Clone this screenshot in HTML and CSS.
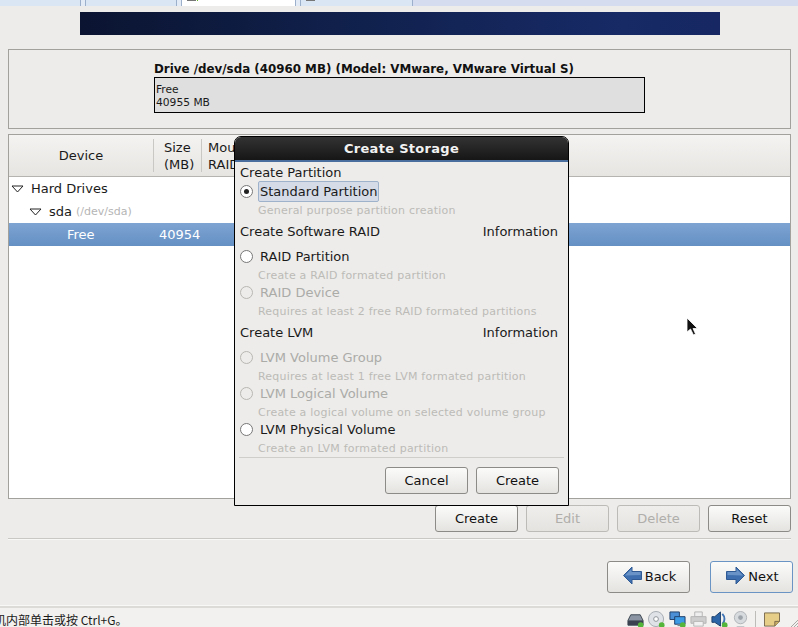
FILE: index.html
```html
<!DOCTYPE html>
<html lang="zh">
<head>
<meta charset="utf-8">
<title>Create Storage</title>
<link rel="stylesheet" href="styles.css">
</head>
<body>
<div class="screen">
  <div class="tabs">
    <div class="tab t1"></div>
    <div class="tab t2"></div>
    <div class="tab active"><i class="tabicon"></i></div>
    <div class="tab t4"><i class="tabicon grey"></i></div>
    <div class="tabrest"></div>
  </div>
  <main class="installer">
    <div class="banner"></div>
    <section class="drive">
      <div class="drive-inner">
        <div class="drive-title">Drive /dev/sda (40960 MB) (Model: VMware, VMware Virtual S)</div>
        <div class="drive-bar">Free<br>40955 MB</div>
      </div>
    </section>
    <section class="tree">
      <div class="tree-head">
        <div class="th th-device">Device</div>
        <div class="th th-size">Size<br>(MB)</div>
        <div class="th th-mount">Mount Point/<br>RAID/Volume</div>
      </div>
      <div class="row r1"><svg class="exp" width="13" height="8" viewBox="0 0 13 8"><path d="M1 1h11L6.500 7z" fill="#fff" stroke="#222"/></svg><span>Hard Drives</span></div>
      <div class="row r2"><svg class="exp" width="13" height="8" viewBox="0 0 13 8"><path d="M1 1h11L6.500 7z" fill="#fff" stroke="#222"/></svg><span>sda</span> <small>(/dev/sda)</small></div>
      <div class="row selected"><span class="c-free">Free</span><span>40954</span></div>
    </section>
    <div class="actions">
      <button class="btn">Create</button>
      <button class="btn off">Edit</button>
      <button class="btn off">Delete</button>
      <button class="btn">Reset</button>
    </div>
    <hr class="sep">
    <div class="nav">
      <button class="btn big">
        <svg width="19" height="20" viewBox="0 0 19 20"><path d="M0.500 9.500 9 1v4.500h9.500v8H9V18z" fill="#3f6fae" stroke="#2f5a94"/><path d="M2 9.500 8.500 3v3h9v3z" fill="#6a94c8"/></svg>Back
      </button>
      <button class="btn big focus">
        <svg width="19" height="20" viewBox="0 0 19 20"><path d="M18.500 9.500 10 1v4.500H.5v8H10V18z" fill="#3f6fae" stroke="#2f5a94"/><path d="M17 9.500 10.500 3v3h-9v3z" fill="#6a94c8"/></svg>Next
      </button>
    </div>
  </main>
  <footer class="status">
    <span class="hint">机内部单击或按 Ctrl+G。</span>
    <div class="tray">
      <svg width="17" height="17" viewBox="0 0 18 18"><path d="M1 10 4 4h10l3 6v5H1z" fill="#8a94a2" stroke="#3a4450"/><path d="M1 10h16v5H1z" fill="#39424e"/><circle cx="14.500" cy="15" r="3" fill="#55b53a"/></svg>
      <svg width="17" height="17" viewBox="0 0 18 18"><circle cx="8.500" cy="8.500" r="8" fill="#dfe2e6" stroke="#a4aab0"/><circle cx="8.500" cy="8.500" r="2.500" fill="#fff" stroke="#8a9096"/><circle cx="14.500" cy="15" r="3" fill="#55b53a"/></svg>
      <svg width="17" height="17" viewBox="0 0 18 18"><path d="M1 1h10v8H1z" fill="#4b8fd6" stroke="#1f3d66"/><path d="M6 6h11v8H6z" fill="#3d9be6" stroke="#1f3d66"/><path d="M9 14h5v2H9z" fill="#789"/><circle cx="14.500" cy="15" r="3" fill="#55b53a"/></svg>
      <svg class="dim" width="17" height="17" viewBox="0 0 18 18"><path d="M5 1h8v5H5z" fill="#eee" stroke="#aaa"/><path d="M1 6h16v7H1z" fill="#c9c9c9" stroke="#aaa"/><path d="M4 11h10v5H4z" fill="#f2f2f2" stroke="#aaa"/></svg>
      <svg width="17" height="17" viewBox="0 0 18 18"><path d="M1 6h3l6-5v15l-6-4H1z" fill="#2d66a8" stroke="#173a66"/><path d="M12 3c3 3 3 8 0 11" fill="none" stroke="#3f74b4" stroke-width="2"/><circle cx="14.500" cy="15" r="3" fill="#55b53a"/></svg>
      <svg class="dim" width="17" height="17" viewBox="0 0 18 18"><circle cx="9" cy="7" r="6.500" fill="#d4d8dc" stroke="#a4a8ac"/><circle cx="9" cy="7" r="2.500" fill="#8f979f"/><path d="M5 16h8v1.500H5z" fill="#b6babe"/></svg>
      <i class="traysep"></i>
      <svg width="16" height="15" viewBox="0 0 17 15"><path d="M.5.500h16v9l-5 5H.5z" fill="#e6cd88" stroke="#77664a"/><path d="M16.500 9.500h-5v5" fill="#c9ae66" stroke="#77664a"/></svg>
    </div>
    <svg class="grip" width="7" height="7" viewBox="0 0 7 7"><path d="M0 7 7 0M3 7l4-4M6 7l1-1" stroke="#a9a8a4" fill="none"/></svg>
  </footer>

  <div class="dialog" role="dialog">
    <div class="dlg-title">Create Storage</div>
    <div class="dlg-body">
      <div class="hd">Create Partition</div>
      <div class="opt o-first"><i class="radio on"></i><span class="label focused">Standard Partition</span></div>
      <div class="desc">General purpose partition creation</div>
      <div class="hd hd-info"><span>Create Software RAID</span><span>Information</span></div>
      <div class="opt o-raid"><i class="radio"></i><span class="label">RAID Partition</span></div>
      <div class="desc">Create a RAID formated partition</div>
      <div class="opt dis"><i class="radio"></i><span class="label">RAID Device</span></div>
      <div class="desc">Requires at least 2 free RAID formated partitions</div>
      <div class="hd hd-info"><span>Create LVM</span><span>Information</span></div>
      <div class="opt dis o-raid"><i class="radio"></i><span class="label">LVM Volume Group</span></div>
      <div class="desc">Requires at least 1 free LVM formated partition</div>
      <div class="opt dis"><i class="radio"></i><span class="label">LVM Logical Volume</span></div>
      <div class="desc">Create a logical volume on selected volume group</div>
      <div class="opt"><i class="radio"></i><span class="label">LVM Physical Volume</span></div>
      <div class="desc">Create an LVM formated partition</div>
      <hr class="dlg-sep">
      <div class="dlg-actions">
        <button class="btn">Cancel</button>
        <button class="btn">Create</button>
      </div>
    </div>
  </div>

  <svg class="cursor" width="13" height="20" viewBox="0 0 13 20"><path d="M1 1v14l3.500-3 3 6 2-1-2.500-5.500h4.500z" fill="#111" stroke="#fff" stroke-width=".8"/></svg>
</div>
</body>
</html>
```

FILE: styles.css
```css
* { box-sizing: border-box; }
html, body { margin: 0; padding: 0; }
body { font-family: "DejaVu Sans", sans-serif; font-size: 13px; color: #1a1a1a; background: #edecea; }
.screen { position: relative; width: 798px; height: 627px; overflow: hidden; display: flex; flex-direction: column; background: #edecea; }

.tabs { height: 6px; display: flex; flex: none; background: #e3ebf7; }
.tab { height: 6px; background: #dbe6f5; border-right: 1px solid #9cb0cc; position: relative; }
.t1 { width: 81px; }
.t2 { width: 92px; margin-left: 4px; border-left: 1px solid #9cb0cc; }
.active { width: 115px; margin-left: 4px; background: #fff; border-left: 1px solid #9cb0cc; }
.t4 { width: 113px; margin-left: 4px; border-left: 1px solid #9cb0cc; }
.tabicon { position: absolute; left: 5px; top: 0; width: 9px; height: 1px; background: #777; }
.tabicon:not(.grey)::after { content: ""; position: absolute; left: 10px; top: 0; width: 1px; height: 1px; background: #6ab82e; }
.tabrest { flex: 1; background: #d5dcef; }

.installer { flex: 1; min-height: 0; padding: 6px 7px 0 8px; display: flex; flex-direction: column; }
.banner { width: 640px; height: 23px; margin-left: 72px; flex: none; background: linear-gradient(90deg, #0b1431 0%, #10204b 40%, #172a66 85%, #162763 100%); }

.drive { height: 80px; margin-top: 14px; border: 1px solid #a3a19c; flex: none; padding: 12px 0 0 145px; }
.drive-title { font-weight: bold; font-size: 11.870px; line-height: 14px; color: #111; white-space: nowrap; }
.drive-bar { width: 491px; height: 36px; margin-top: 1px; border: 1px solid #000; background: #dfdfdf; font-size: 10.700px; line-height: 13px; padding: 5px 0 0 1px; }

.tree { height: 365px; margin-top: 5px; border: 1px solid #a3a19c; background: #fff; flex: none; }
.tree-head { height: 42px; display: flex; background: linear-gradient(#f4f3f1, #e6e5e2); border-bottom: 1px solid #b6b4b0; }
.th { display: flex; align-items: center; line-height: 17px; font-size: 13px; margin: 4px 0; padding-left: 10px; border-right: 1px solid #c9c8c4; }
.th-device { width: 145px; justify-content: center; padding: 0; }
.th-size { width: 48px; }
.th-mount { width: 300px; border: 0; padding-left: 6px; white-space: nowrap; }
.row { height: 23px; display: flex; align-items: center; font-size: 13px; white-space: pre; }
.exp { flex: none; }
.r1 { padding-left: 2px; }
.r1 span { margin-left: 7px; }
.r2 { padding-left: 20px; }
.r2 span { margin-left: 7px; }
.r2 small { font-size: 11px; color: #b5b5b5; margin-left: 4px; }
.selected { background: linear-gradient(#7ea4d2, #6490c4); color: #fff; }
.c-free { width: 150px; padding-left: 58px; }

.actions { display: flex; justify-content: flex-end; gap: 8px; margin-top: 6px; flex: none; }
.btn { width: 83px; height: 27px; padding: 0; border: 1px solid #8d8b87; border-radius: 3px; background: linear-gradient(#fbfbfa, #e4e3e0); font-family: inherit; font-size: 13px; color: #111; }
.off { color: #b0aeaa; border-color: #bdbbb7; background: linear-gradient(#efeeec, #e4e3e0); }
.sep { width: 100%; height: 2px; margin: 6px 0 0; border: 0; border-top: 1px solid #c9c8c4; border-bottom: 1px solid #f8f8f7; flex: none; }
.nav { display: flex; justify-content: flex-end; gap: 20px; margin: 21px -2px 0 0; flex: none; }
.big { height: 32px; display: flex; align-items: center; justify-content: center; gap: 3px; padding: 0 0 2px 2px; }
.focus { border-color: #6a94c4; }

.status { height: 21px; flex: none; border-top: 2px solid #dcdbd8; background: #f2f1ef; box-shadow: 0 -1px 0 #f8f8f7; display: flex; justify-content: space-between; align-items: center; padding: 3px 18px 0 0; position: relative; }
.hint { font-family: "Noto Sans CJK SC", "Liberation Sans", sans-serif; font-size: 12px; margin-left: -6px; }
.tray { display: flex; align-items: center; gap: 4px; }
.dim { opacity: .85; }
.traysep { width: 1px; height: 16px; background: #bdbcb9; margin: 0 4px 0 2px; }
.grip { position: absolute; right: 0; bottom: 0; }

.dialog { position: absolute; left: 234px; top: 136px; width: 335px; height: 370px; border: 1px solid #000; border-radius: 7px 7px 0 0; background: #edecea; overflow: hidden; }
.dlg-title { height: 25px; background: linear-gradient(#333, #161616); color: #f2f2f2; font-weight: bold; font-size: 13px; letter-spacing: .3px; text-align: center; line-height: 24px; border-bottom: 2px solid #4a6f9f; }
.dlg-body { padding: 0 8px 0 5px; }
.hd { height: 20px; line-height: 22px; font-size: 13px; }
.hd-info { display: flex; justify-content: space-between; padding-right: 2px; margin-top: 4px; }
.opt { height: 20px; display: flex; align-items: center; font-size: 13px; }
.o-first { margin-top: -1px; }
.o-raid { margin-top: 5px; }
.radio { width: 13px; height: 13px; flex: none; border-radius: 50%; border: 1px solid #777; background: #fff; margin-right: 5px; position: relative; }
.radio.on::after { content: ""; position: absolute; left: 3px; top: 3px; width: 5px; height: 5px; border-radius: 50%; background: #222; }
.label { padding: 0 1px 0 2px; line-height: 17px; white-space: nowrap; }
.focused { background: #d5dce8; border: 1px solid #9fb2cc; border-radius: 2px; height: 21px; margin-top: 1px; line-height: 19px; padding: 0 1px; }
.dis { color: #ababa8; }
.dis .radio { background: #edecea; border-color: #b8b7b3; }
.desc { height: 14px; margin-top: 2px; line-height: 16px; font-size: 11px; color: #bcbbb7; padding-left: 18px; letter-spacing: .22px; white-space: nowrap; }
.dlg-sep { margin: 2px -4px 0 -1px; height: 1px; border: 0; background: #cfcecb; }
.dlg-actions { display: flex; justify-content: flex-end; gap: 8px; margin-top: 9px; margin-right: 1px; }

.cursor { position: absolute; left: 686px; top: 317px; }
```
